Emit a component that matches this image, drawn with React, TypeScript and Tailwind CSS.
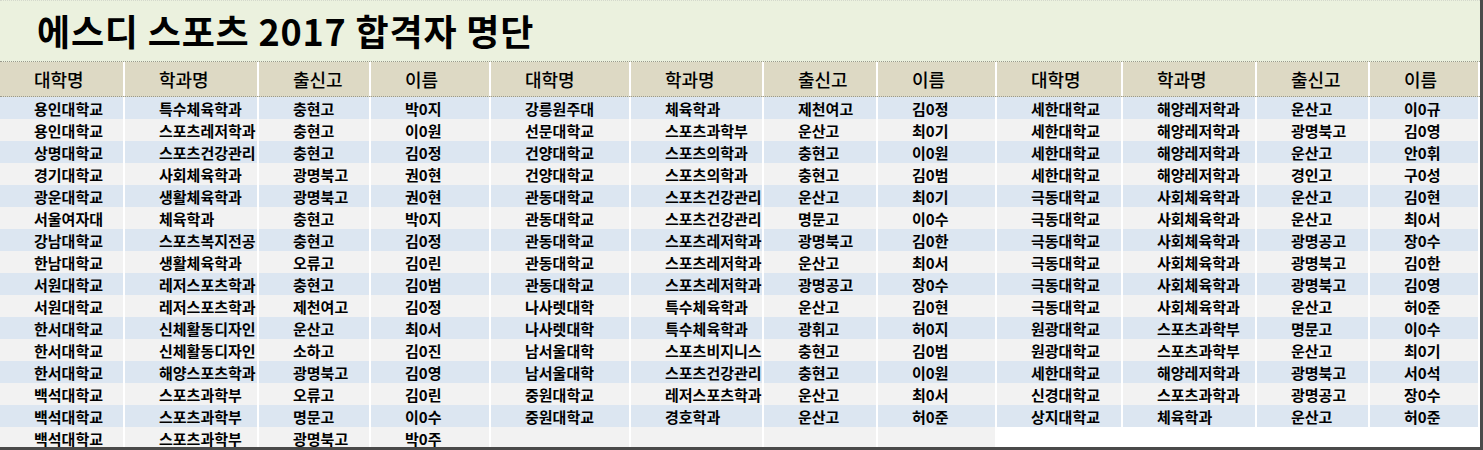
import React from "react";

type Row = [string, string, string, string];

const groupA: Row[] = [
  ["용인대학교", "특수체육학과", "충현고", "박0지"],
  ["용인대학교", "스포츠레저학과", "충현고", "이0원"],
  ["상명대학교", "스포츠건강관리", "충현고", "김0정"],
  ["경기대학교", "사회체육학과", "광명북고", "권0현"],
  ["광운대학교", "생활체육학과", "광명북고", "권0현"],
  ["서울여자대", "체육학과", "충현고", "박0지"],
  ["강남대학교", "스포츠복지전공", "충현고", "김0정"],
  ["한남대학교", "생활체육학과", "오류고", "김0린"],
  ["서원대학교", "레저스포츠학과", "충현고", "김0범"],
  ["서원대학교", "레저스포츠학과", "제천여고", "김0정"],
  ["한서대학교", "신체활동디자인", "운산고", "최0서"],
  ["한서대학교", "신체활동디자인", "소하고", "김0진"],
  ["한서대학교", "해양스포츠학과", "광명북고", "김0영"],
  ["백석대학교", "스포츠과학부", "오류고", "김0린"],
  ["백석대학교", "스포츠과학부", "명문고", "이0수"],
  ["백석대학교", "스포츠과학부", "광명북고", "박0주"],
];

const groupB: Row[] = [
  ["강릉원주대", "체육학과", "제천여고", "김0정"],
  ["선문대학교", "스포츠과학부", "운산고", "최0기"],
  ["건양대학교", "스포츠의학과", "충현고", "이0원"],
  ["건양대학교", "스포츠의학과", "충현고", "김0범"],
  ["관동대학교", "스포츠건강관리", "운산고", "최0기"],
  ["관동대학교", "스포츠건강관리", "명문고", "이0수"],
  ["관동대학교", "스포츠레저학과", "광명북고", "김0한"],
  ["관동대학교", "스포츠레저학과", "운산고", "최0서"],
  ["관동대학교", "스포츠레저학과", "광명공고", "장0수"],
  ["나사렛대학", "특수체육학과", "운산고", "김0현"],
  ["나사렛대학", "특수체육학과", "광휘고", "허0지"],
  ["남서울대학", "스포츠비지니스", "충현고", "김0범"],
  ["남서울대학", "스포츠건강관리", "충현고", "이0원"],
  ["중원대학교", "레저스포츠학과", "운산고", "최0서"],
  ["중원대학교", "경호학과", "운산고", "허0준"],
];

const groupC: Row[] = [
  ["세한대학교", "해양레저학과", "운산고", "이0규"],
  ["세한대학교", "해양레저학과", "광명북고", "김0영"],
  ["세한대학교", "해양레저학과", "운산고", "안0휘"],
  ["세한대학교", "해양레저학과", "경인고", "구0성"],
  ["극동대학교", "사회체육학과", "운산고", "김0현"],
  ["극동대학교", "사회체육학과", "운산고", "최0서"],
  ["극동대학교", "사회체육학과", "광명공고", "장0수"],
  ["극동대학교", "사회체육학과", "광명북고", "김0한"],
  ["극동대학교", "사회체육학과", "광명북고", "김0영"],
  ["극동대학교", "사회체육학과", "운산고", "허0준"],
  ["원광대학교", "스포츠과학부", "명문고", "이0수"],
  ["원광대학교", "스포츠과학부", "운산고", "최0기"],
  ["세한대학교", "해양레저학과", "광명북고", "서0석"],
  ["신경대학교", "스포츠과학과", "광명공고", "장0수"],
  ["상지대학교", "체육학과", "운산고", "허0준"],
];

const headers = ["대학명", "학과명", "출신고", "이름"];
const cols =
  "grid grid-cols-[125px_134px_112px_120px_140px_133px_114px_119px_126px_134px_113px_110px]";

const font = { fontFamily: '"Noto Sans CJK KR", "Noto Sans", sans-serif' };

export default function App() {
  const rows = Array.from({ length: 16 }, (_, i) => i);

  return (
    <div
      style={font}
      className="w-[1483px] h-[450px] overflow-hidden bg-white border-r-[3px] border-b-[3px] border-[#4a4a4a] text-black"
    >
      {/* title band */}
      <div className="h-[62px] bg-[#ebf1de] border-t border-[#d4d8cc] border-b border-dotted border-b-[#9a9a8c] flex items-center pl-[37px]">
        <h1 className="text-[36px] font-bold tracking-[0.8px] leading-none pb-[3px]">
          에스디 스포츠 2017 합격자 명단
        </h1>
      </div>

      {/* header row */}
      <div className={`${cols} h-[35px] bg-[#ddd9c4] border-b border-dotted border-[#9a9a8c]`}>
        {[0, 1, 2].flatMap((g) =>
          headers.map((h, j) => (
            <div
              key={`${g}-${j}`}
              className="border-r-2 border-white flex items-center pl-[34px] text-[18px] font-medium leading-none"
            >
              {h}
            </div>
          ))
        )}
      </div>

      {/* data rows */}
      {rows.map((i) => {
        const bg = i % 2 === 0 ? "bg-[#dce6f1]" : "bg-[#f2f2f2]";
        const cells = [groupA[i], groupB[i], groupC[i]];
        return (
          <div key={i} className={`${cols} h-[22px] ${bg}`}>
            {cells.flatMap((row, g) =>
              [0, 1, 2, 3].map((j) => (
                <div
                  key={`${g}-${j}`}
                  className={`border-r-2 border-white flex items-center pl-[34px] text-[15px] font-bold leading-none whitespace-nowrap ${
                    !row && g === 2 ? "bg-white" : ""
                  }`}
                >
                  {row ? row[j] : ""}
                </div>
              ))
            )}
          </div>
        );
      })}
    </div>
  );
}
